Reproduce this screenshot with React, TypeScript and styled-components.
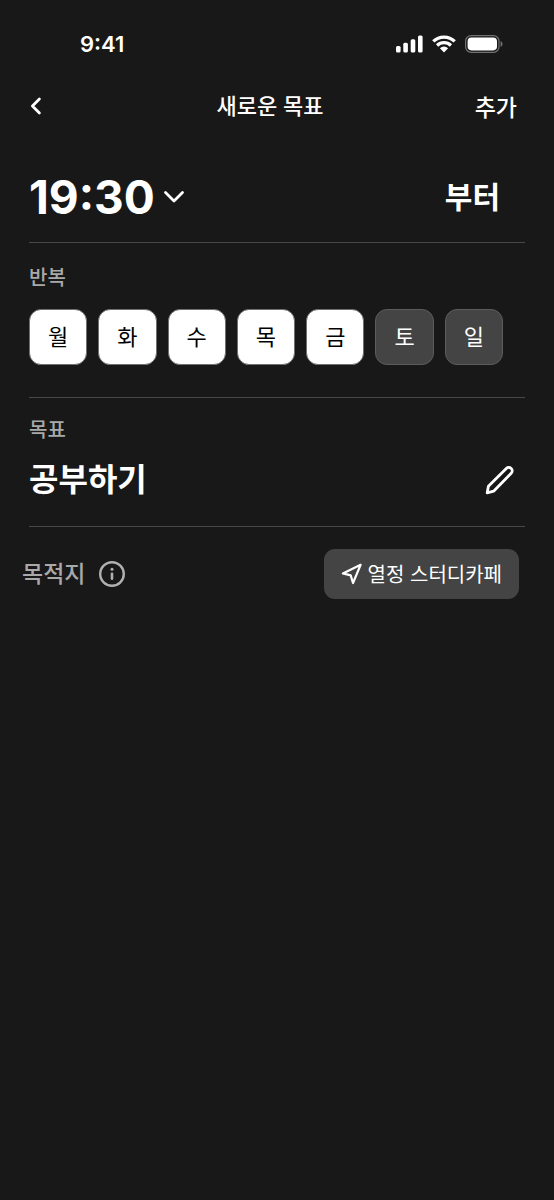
import React, { useState } from "react";
import styled, { createGlobalStyle } from "styled-components";

const koreanFont = `"Noto Sans CJK KR", sans-serif`;

const GlobalStyle = createGlobalStyle`
  *, *::before, *::after { box-sizing: border-box; }
  html, body, #root { min-height: 100%; }
  body {
    margin: 0;
    background: #181818;
    color: #ffffff;
    font-family: Inter, "Noto Sans CJK KR", sans-serif;
  }
  button, input, select { font: inherit; color: inherit; }
`;

const Screen = styled.div`
  min-height: 100vh;
  background: #181818;
`;

const StatusBar = styled.div`
  display: flex;
  align-items: center;
  justify-content: space-between;
  height: 88px;
  padding: 0 51px 0 80px;
`;

const Clock = styled.span`
  font-size: 22px;
  line-height: 28px;
  font-weight: 600;
`;

const StatusIcons = styled.div`
  display: flex;
  align-items: center;
  gap: 9px;
`;

const NavBar = styled.header`
  display: grid;
  grid-template-columns: 1fr auto 1fr;
  align-items: center;
  height: 36px;
  padding: 0 37px 0 23px;
`;

const NavTitle = styled.h1`
  margin: 0;
  font-size: 22px;
  line-height: 32px;
  font-weight: 500;
`;

const PlainButton = styled.button`
  display: flex;
  align-items: center;
  padding: 0;
  border: 0;
  background: none;
  cursor: pointer;
`;

const BackButton = styled(PlainButton)`
  justify-self: start;
  padding: 0 6px;
`;

const AddButton = styled(PlainButton)`
  justify-self: end;
  font-family: ${koreanFont};
  font-size: 23px;
  line-height: 32px;
  font-weight: 500;
`;

const Form = styled.form`
  padding: 28px 29px 0;
`;

const Section = styled.section`
  border-bottom: 1px solid #484848;
`;

const TimeSection = styled(Section)`
  display: flex;
  align-items: center;
  justify-content: space-between;
  height: 91px;
  padding-right: 25px;
`;

const TimePicker = styled.label`
  display: grid;
  align-items: center;

  > * { grid-area: 1 / 1; }
  > svg { justify-self: end; pointer-events: none; }
`;

const TimeSelect = styled.select`
  appearance: none;
  field-sizing: content;
  padding: 0 30px 0 0;
  border: 0;
  background: none;
  font-size: 46px;
  line-height: 56px;
  font-weight: 700;
  cursor: pointer;

  option { color: #181818; }
`;

const Suffix = styled.span`
  font-size: 30px;
  line-height: 44px;
  font-weight: 700;
`;

const RepeatSection = styled(Section)`
  padding: 20px 22px 32px 0;
`;

const Caption = styled.h2`
  margin: 0;
  color: #a9a9a9;
  font-family: ${koreanFont};
  font-size: 20px;
  line-height: 28px;
  font-weight: 500;
`;

const Days = styled.div`
  display: grid;
  grid-template-columns: repeat(7, 1fr);
  gap: 11px;
  margin-top: 18px;
`;

const Day = styled.label`
  display: grid;
  height: 56px;
  cursor: pointer;

  > * { grid-area: 1 / 1; }
`;

const DayInput = styled.input`
  appearance: none;
  margin: 0;
  border: 1px solid #5c5c5c;
  border-radius: 12px;
  background: #444444;

  &:checked {
    border-color: #707070;
    background: #ffffff;
  }
`;

const DayName = styled.span`
  place-self: center;
  font-size: 22px;
  line-height: 32px;
  font-weight: 400;

  ${DayInput}:checked + & { color: #000000; }
`;

const GoalSection = styled(Section)`
  padding: 17px 11px 22px 0;
`;

const GoalRow = styled.div`
  display: flex;
  align-items: center;
  justify-content: space-between;
  margin-top: 13px;
`;

const Goal = styled.p`
  margin: 0;
  font-size: 32px;
  line-height: 48px;
  font-weight: 700;
`;

const PlaceSection = styled.section`
  display: flex;
  align-items: center;
  justify-content: space-between;
  margin: 22px 6px 0 -7px;
`;

const PlaceTitle = styled.div`
  display: flex;
  align-items: center;
  gap: 13px;
  color: #b0b0b0;
`;

const PlaceLabel = styled.h2`
  margin: 0;
  color: #a9a9a9;
  font-size: 23px;
  line-height: 32px;
  font-weight: 500;
`;

const PlaceButton = styled(PlainButton)`
  height: 50px;
  padding: 0 17px;
  gap: 5px;
  border-radius: 11px;
  background: #444444;
  font-family: ${koreanFont};
  font-size: 20px;
  line-height: 28px;
  font-weight: 400;
`;

const stroke = {
  fill: "none",
  stroke: "currentColor",
  strokeLinecap: "round" as const,
  strokeLinejoin: "round" as const,
};

const SignalIcon = () => (
  <svg width="27" height="18" viewBox="0 0 27 18" fill="currentColor" aria-hidden="true">
    <rect x="0" y="11" width="4.6" height="6.5" rx="1.5" />
    <rect x="7.3" y="7.8" width="4.6" height="9.7" rx="1.5" />
    <rect x="14.7" y="4.2" width="4.6" height="13.3" rx="1.5" />
    <rect x="22" y="0.4" width="4.6" height="17.1" rx="1.5" />
  </svg>
);

const WifiIcon = () => (
  <svg width="24" height="18" viewBox="0 0 24 18" aria-hidden="true">
    <g fill="none" stroke="currentColor" strokeWidth="3.3">
      <path d="M1.3 6.4A15.3 15.3 0 0 1 22.7 6.4" />
      <path d="M5.1 10.5A9.9 9.9 0 0 1 18.9 10.5" />
    </g>
    <path d="M7.9 13.2a5.9 5.9 0 0 1 8.2 0l-3.6 3.9q-.5.5-1 0z" fill="currentColor" />
  </svg>
);

const BatteryIcon = () => (
  <svg width="38" height="18" viewBox="0 0 38 18" aria-hidden="true">
    <rect x="0.6" y="0.6" width="33.4" height="16.8" rx="5.6" fill="none" stroke="#727272" strokeWidth="1.2" />
    <rect x="2.6" y="2.6" width="29.4" height="12.8" rx="3.8" fill="currentColor" />
    <path d="M35.6 6v6c1.2-.5 1.9-1.6 1.9-3s-.7-2.5-1.9-3z" fill="#727272" />
  </svg>
);

const BackIcon = () => (
  <svg width="14" height="18" viewBox="0 0 14 18" {...stroke} strokeWidth="2.8" aria-hidden="true">
    <path d="M10.4 2 3.4 9l7 7" />
  </svg>
);

const ChevronDownIcon = () => (
  <svg width="22" height="14" viewBox="0 0 22 14" {...stroke} strokeWidth="2.8" aria-hidden="true">
    <path d="M2.5 2.5 11 11l8.5-8.5" />
  </svg>
);

const PencilIcon = () => (
  <svg width="30" height="30" viewBox="0 0 30 30" {...stroke} strokeWidth="2.8" aria-hidden="true">
    <path d="M3.2 27.8 4.4 21.3 22.3 3.4a3.4 3.4 0 0 1 4.9 4.9L9.6 26.2Z" />
  </svg>
);

const InfoIcon = () => (
  <svg width="28" height="28" viewBox="0 0 28 28" fill="none" stroke="currentColor" aria-hidden="true">
    <circle cx="14" cy="14" r="11.8" strokeWidth="2.4" />
    <path d="M14 13.8v5" strokeWidth="2.6" strokeLinecap="round" />
    <circle cx="14" cy="9.3" r="1.5" fill="currentColor" stroke="none" />
  </svg>
);

const LocationIcon = () => (
  <svg width="22" height="22" viewBox="0 0 22 22" {...stroke} strokeWidth="2.2" aria-hidden="true">
    <path d="M19.6 1.8 1.9 10.400l7.800 2 2.300 7.600z" />
  </svg>
);

const times = ["17:30", "18:30", "19:30"];
const dayNames = ["월", "화", "수", "목", "금", "토", "일"];

export default function App() {
  const [time, setTime] = useState("19:30");
  const [selected, setSelected] = useState(["월", "화", "수", "목", "금"]);

  const toggle = (day: string) =>
    setSelected((days) => (days.includes(day) ? days.filter((d) => d !== day) : [...days, day]));

  return (
    <>
      <GlobalStyle />
      <Screen lang="ko">
        <StatusBar>
          <Clock>9:41</Clock>
          <StatusIcons>
            <SignalIcon />
            <WifiIcon />
            <BatteryIcon />
          </StatusIcons>
        </StatusBar>
        <NavBar>
          <BackButton type="button" aria-label="뒤로">
            <BackIcon />
          </BackButton>
          <NavTitle>새로운 목표</NavTitle>
          <AddButton type="submit" form="goal-form">추가</AddButton>
        </NavBar>
        <Form id="goal-form" onSubmit={(e) => e.preventDefault()}>
          <TimeSection>
            <TimePicker>
              <TimeSelect aria-label="시작 시간" value={time} onChange={(e) => setTime(e.target.value)}>
                {times.map((t) => (
                  <option key={t}>{t}</option>
                ))}
              </TimeSelect>
              <ChevronDownIcon />
            </TimePicker>
            <Suffix>부터</Suffix>
          </TimeSection>
          <RepeatSection>
            <Caption>반복</Caption>
            <Days>
              {dayNames.map((day) => (
                <Day key={day}>
                  <DayInput type="checkbox" checked={selected.includes(day)} onChange={() => toggle(day)} />
                  <DayName>{day}</DayName>
                </Day>
              ))}
            </Days>
          </RepeatSection>
          <GoalSection>
            <Caption>목표</Caption>
            <GoalRow>
              <Goal>공부하기</Goal>
              <PlainButton type="button" aria-label="목표 수정">
                <PencilIcon />
              </PlainButton>
            </GoalRow>
          </GoalSection>
          <PlaceSection>
            <PlaceTitle>
              <PlaceLabel>목적지</PlaceLabel>
              <PlainButton type="button" aria-label="목적지 안내">
                <InfoIcon />
              </PlainButton>
            </PlaceTitle>
            <PlaceButton type="button">
              <LocationIcon />
              열정 스터디카페
            </PlaceButton>
          </PlaceSection>
        </Form>
      </Screen>
    </>
  );
}
